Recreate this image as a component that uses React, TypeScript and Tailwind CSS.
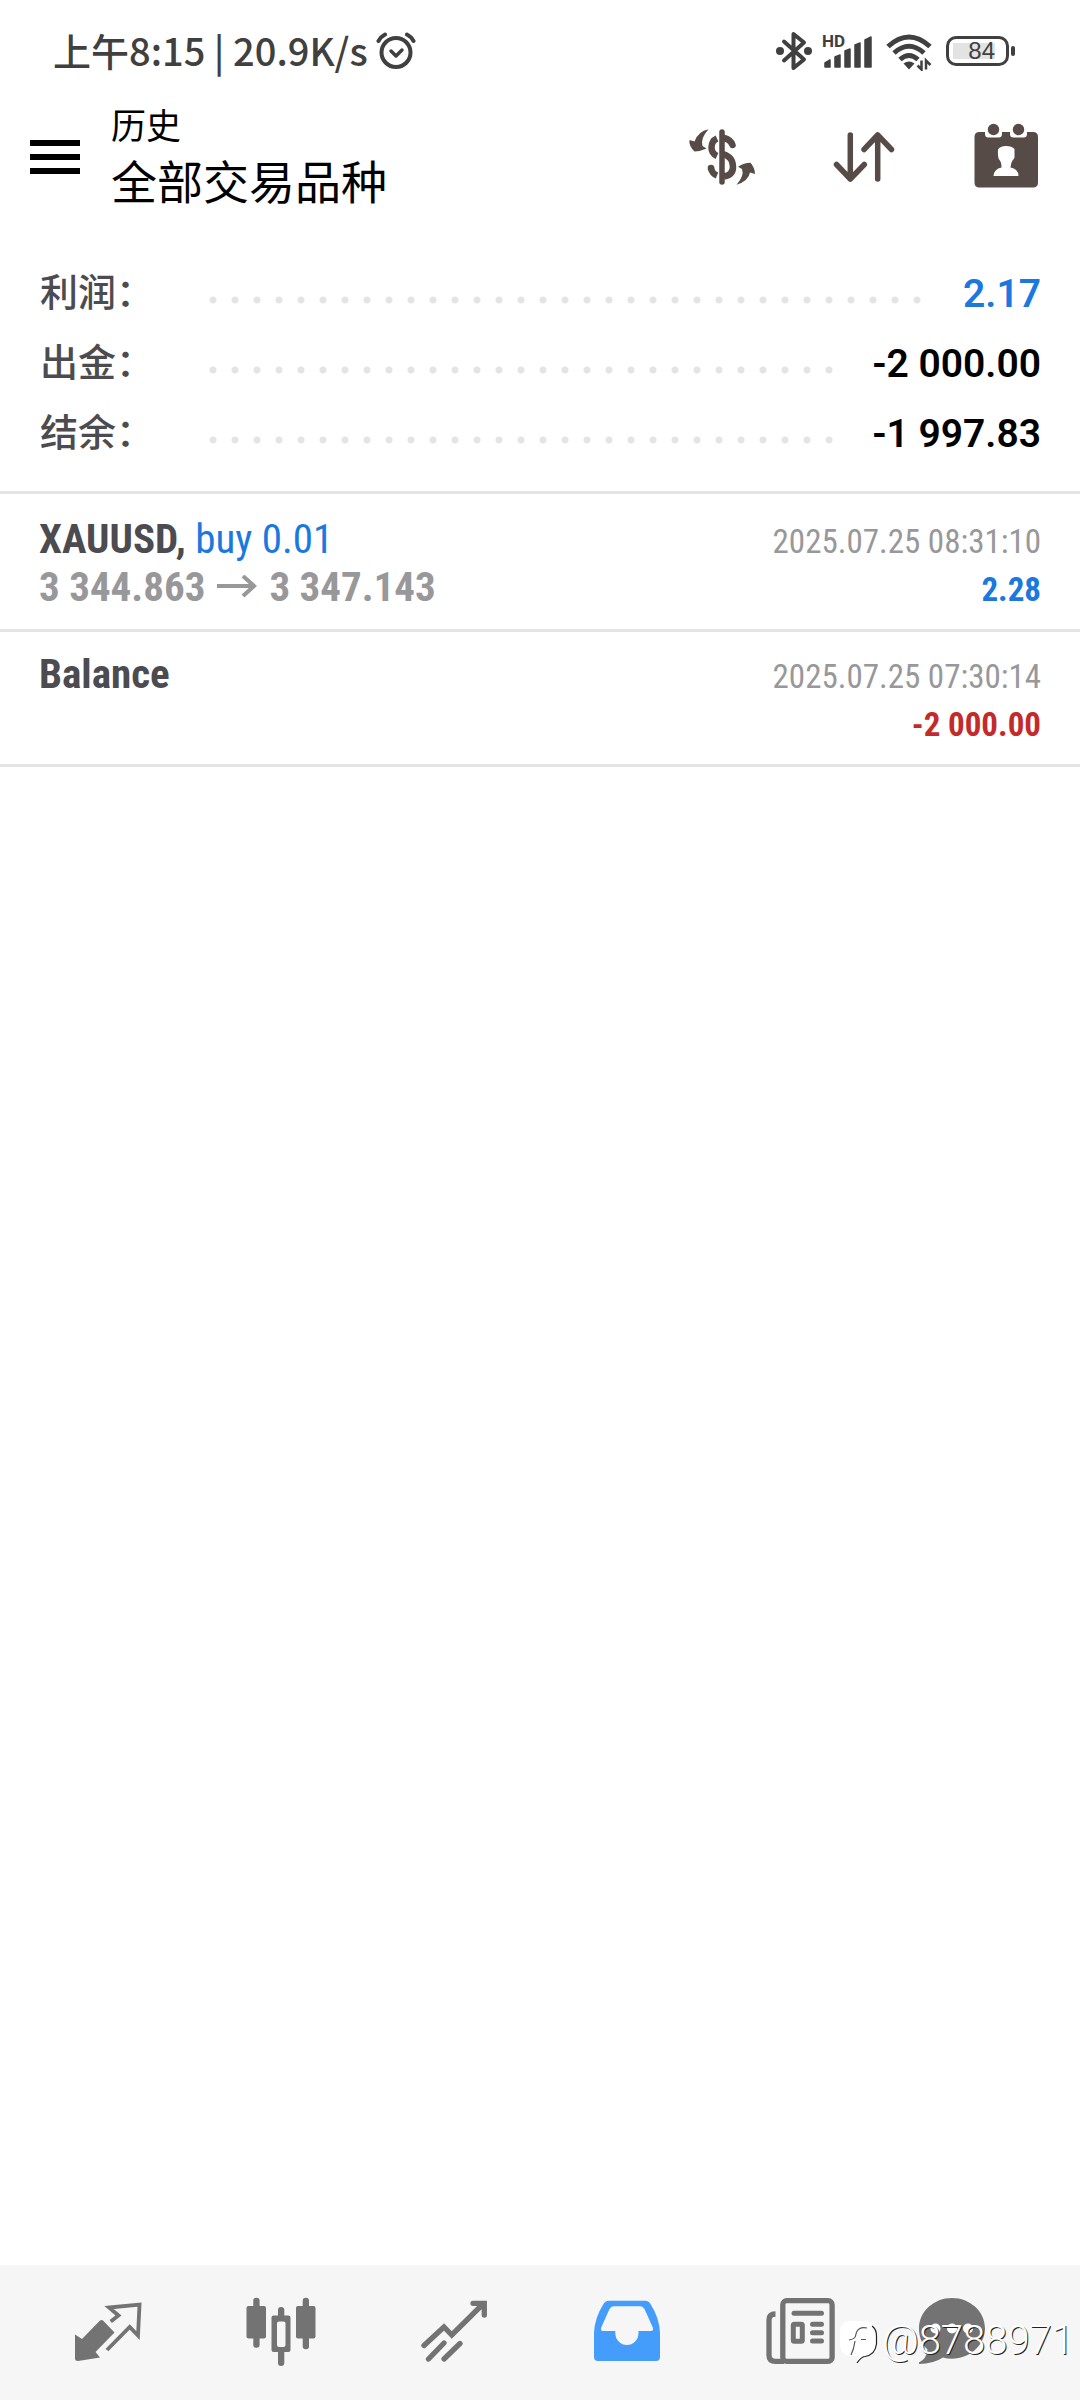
import React from "react";

const summary = [
  { label: "利润：", value: "2.17", color: "text-[#1a78de]" },
  { label: "出金：", value: "-2 000.00", color: "text-black" },
  { label: "结余：", value: "-1 997.83", color: "text-black" },
];

const StatusBar: React.FC = () => (
  <div className="flex h-[102px] items-center justify-between pl-[53px] pr-[65px] text-[#404040]">
    <div className="flex items-center gap-2">
      <span className="pb-0.5 font-['Noto_Sans_CJK_SC',sans-serif] text-[38px] font-medium leading-[48px]">
        上午8:15 | 20.9K/s
      </span>
      <svg className="h-10 w-10" viewBox="0 0 40 40" fill="none" stroke="currentColor" strokeLinecap="round">
        <circle cx="20" cy="21.5" r="14.5" strokeWidth="4" />
        <path d="M15 20l5 5 6-6" strokeWidth="3.5" strokeLinejoin="round" />
        <path d="M2.5 10Q5 5.500 9 3.500M37.500 10Q35 5.500 31 3.500" strokeWidth="4" />
      </svg>
    </div>

    <div className="flex items-center">
      {/* Bluetooth */}
      <svg className="mr-2.5 h-10 w-9" viewBox="0 0 36 40" fill="none" stroke="currentColor">
        <path d="M8 10.500L28 28.500L17.500 37V3L28 11.500L8 29.500" strokeWidth="4" strokeLinejoin="round" strokeLinecap="round" />
        <circle cx="4" cy="20" r="4" fill="currentColor" stroke="none" />
        <circle cx="32" cy="20" r="4" fill="currentColor" stroke="none" />
      </svg>
      {/* Mobile signal */}
      <svg className="mr-3 h-10 w-[52px]" viewBox="0 0 52 40" fill="currentColor">
        <text x="0" y="16" fontSize="17" fontWeight="700" fontFamily="Roboto, sans-serif">HD</text>
        <path
          d="M3 36V32L8 29V36Z M13 36V26L18 24V36Z M23 36V20L28 18V36Z M33 36V14L38 12V36Z M43 36V9L49 6V36Z"
          stroke="currentColor"
          strokeWidth="1.5"
          strokeLinejoin="round"
        />
      </svg>
      {/* Wifi */}
      <svg className="mr-3.5 h-10 w-[46px]" viewBox="0 0 46 40" fill="none" stroke="currentColor">
        <path d="M2 15.500Q23-3.500 44 15.500" strokeWidth="5" />
        <path d="M8 22Q23 8.500 38 22" strokeWidth="5" />
        <path d="M14 28.500Q23 20.500 32 28.500" strokeWidth="5" />
        <path d="M17.500 32.500Q23 28.500 28.500 32.500L23 38.500Z" fill="currentColor" stroke="none" />
        <path d="M35.500 29.500V38.500L31.500 34.500M40 38.500V29.500L44.500 34" strokeWidth="2.500" />
      </svg>
      {/* Battery */}
      <div className="flex h-[30px] w-[63px] items-center rounded-[10px] border-3 border-current p-1">
        <div className="flex h-full w-[42px] items-center justify-end bg-[#e3e3e3]">
          <span className="font-['Liberation_Sans',sans-serif] text-2xl leading-none">84</span>
        </div>
      </div>
      <div className="ml-0.5 h-[10px] w-1 rounded-sm bg-current" />
    </div>
  </div>
);

const Header: React.FC = () => (
  <header className="flex h-[110px] items-center pl-[30px] pr-[38px]">
    <button aria-label="菜单" className="flex w-[50px] flex-col gap-2 bg-transparent">
      <span className="h-1.5 w-full bg-black" />
      <span className="h-1.5 w-full bg-black" />
      <span className="h-1.5 w-full bg-black" />
    </button>
    <div className="ml-[31px] flex-1 pb-1 font-['Noto_Sans_CJK_SC',sans-serif] text-black">
      <p className="text-[35px] leading-[48px]">历史</p>
      <h1 className="text-[46px] leading-[62px]">全部交易品种</h1>
    </div>
    <div className="flex gap-[70px] text-[#574b48]">
      <button aria-label="货币">
        <svg className="h-[72px] w-[72px]" viewBox="0 0 72 72" fill="none" stroke="currentColor" strokeWidth="6.500">
          <path d="M36 11V61" strokeWidth="5.500" strokeLinecap="round" />
          <path d="M31 17.500Q25.500 20 25.500 26.500Q25.500 32.500 31 35" />
          <path d="M38 17Q44.500 18.500 46.500 24" strokeLinecap="round" />
          <path d="M37 33Q47 36 47 46Q47 54 38 55.500" />
          <path d="M25 47Q26 52.500 31 54.500" />
          <circle cx="25" cy="47" r="3.300" fill="currentColor" stroke="none" />
          <path d="M22.500 8.300Q12 10.500 8.500 20.500L3.500 19Q2.500 24.500 8.500 30.500Q14 30.500 20.500 27.500L16.500 25Q14 18 22.500 8.300Z" fill="currentColor" stroke="none" />
          <path d="M50.500 63.700Q62.500 60 64 51.500L69 53Q69 47 64.500 41.700Q58 41.700 52 45.700L56 48Q58.500 55 50.500 63.700Z" fill="currentColor" stroke="none" />
        </svg>
      </button>
      <button aria-label="排序">
        <svg className="h-[72px] w-[72px]" viewBox="0 0 72 72" fill="none" stroke="currentColor" strokeWidth="5.500" strokeLinecap="round" strokeLinejoin="round">
          <path d="M22.300 14V58M8.500 43.500L22.300 58L36.300 43.500" />
          <path d="M49.700 58V14M36 28.500L49.700 14L63.500 28.500" />
        </svg>
      </button>
      <button aria-label="日期">
        <svg className="h-[72px] w-[72px]" viewBox="0 0 72 72" fill="currentColor">
          <path
            fillRule="evenodd"
            d="M9.500 11H15V13Q15 16.500 18.500 16.500H28.500Q32 16.500 32 13V11H40V13Q40 16.500 43.500 16.500H53.500Q57 16.500 57 13V11H63Q68 11 68 16V61.500Q68 66.500 63 66.500H9.500Q4.500 66.500 4.500 61.500V16Q4.500 11 9.500 11ZM28 28.500Q30 25 36 25Q42 25 44.500 28V36.500Q44 38 42.500 39.500Q41 41.500 40.500 46.500Q48.500 48 48.500 55H23.500Q24 48 31.500 46.500Q31.500 41 29.500 39Q27.500 37 28 28.500Z"
          />
          <circle cx="23.500" cy="8.500" r="5.700" />
          <circle cx="48.500" cy="8.500" r="5.700" />
        </svg>
      </button>
    </div>
  </header>
);

const navItems = [
  {
    name: "行情",
    icon: (
      <>
        <path d="M38.700 24.500L46.500 18.500L37 10.500L67.500 7.700L66 38.500L57.700 30L35 53" fill="none" stroke="currentColor" strokeWidth="3.800" />
        <path d="M3 37.500L10 42L28 23.500Q29.500 22.500 31 23.500L42.500 35.500L23.500 55L28 60.500L6 64Q3 64 3 61.500Z" />
      </>
    ),
  },
  {
    name: "图表",
    icon: (
      <>
        <rect x="1.500" y="9" width="19.500" height="32.500" rx="2" />
        <rect x="8.300" y=".7" width="6.300" height="50" rx="3" />
        <path fillRule="evenodd" d="M28.500 18.500H43.500Q45.500 18.500 45.500 20.500V53Q45.500 55 43.500 55H28.500Q26.500 55 26.500 53V20.500Q26.500 18.500 28.500 18.500ZM34 24.500Q32 24.500 32 26.500V48Q32 50 34 50H38.500Q40.500 50 40.500 48V26.500Q40.500 24.500 38.500 24.500Z" />
        <path d="M33 19V13Q33 10 36 10Q39.300 10 39.300 13V19ZM33 54V66Q33 69 36 69Q39.300 69 39.300 66V54Z" />
        <rect x="51" y="9" width="19.500" height="32.500" rx="2" />
        <rect x="57.700" y=".7" width="6.300" height="51.500" rx="3" />
      </>
    ),
  },
  {
    name: "交易",
    icon: (
      <path
        d="M6 48.500L26 30L33.800 38L65 7M55 6.300H66.300V18M10.500 62L26 46M26 62L42 46.500"
        fill="none"
        stroke="currentColor"
        strokeWidth="5.300"
        strokeLinecap="round"
      />
    ),
  },
  {
    name: "历史",
    active: true,
    icon: (
      <path
        fillRule="evenodd"
        d="M18 3.700H54Q57.500 3.700 59.500 7Q68.500 21 69 36V60Q69 64 65 64H7Q3 64 3 60V36Q3.500 21 12.500 7Q14.500 3.700 18 3.700ZM22.500 9.300Q20 9.300 18.500 12L10 31Q9.500 34 12 34H24.300V36A11.600 12 0 0 0 47.500 36V34H60Q62.500 34 62 31L53.500 12Q52 9.300 49.500 9.300Z"
      />
    ),
  },
  {
    name: "新闻",
    icon: (
      <g fill="none" stroke="currentColor" strokeWidth="5.300">
        <rect x="18.800" y="3.700" width="49.300" height="60.700" rx="4" />
        <path d="M11.500 17Q5 17 5 23V58Q5 64.400 11.500 64.400H20" />
        <path d="M30 16.300H57.500M48.500 27.300H57.500M48.500 35.700H57.500M48.500 44H57.500" strokeLinecap="round" strokeWidth="5" />
        <rect x="29.300" y="27.300" width="9" height="17" rx="1" strokeWidth="5" />
      </g>
    ),
  },
  {
    name: "消息",
    icon: (
      <>
        <path d="M36 1C54 1 69 14.500 69 31.300S54 61.700 36 61.700Q31 61.700 27 60.500Q17 67 3 67V65.500Q10.500 62 11.500 52.500C6 47.500 3 40 3 31.300C3 14.500 18 1 36 1Z" />
        <g className="fill-white">
          <circle cx="19.500" cy="31.500" r="5" />
          <circle cx="36" cy="31.500" r="5" />
          <circle cx="52" cy="31.500" r="5" />
        </g>
      </>
    ),
  },
];

const BottomNav: React.FC = () => (
  <nav className="relative grid h-[135px] grid-cols-[173fr_173fr_173fr_173fr_173fr_132fr] items-center overflow-hidden bg-[#f6f6f6] pl-[21px] pr-[62px]">
    {navItems.map((item) => (
      <a
        key={item.name}
        href="#"
        aria-label={item.name}
        className={`flex justify-center ${item.active ? "text-[#459dfb]" : "text-[#737373]"}`}
      >
        <svg className="h-[72px] w-[72px]" viewBox="0 0 72 72" fill="currentColor">
          {item.icon}
        </svg>
      </a>
    ))}

    {/* Watermark */}
    <div className="absolute bottom-[35px] right-1.5 flex items-center gap-1 text-white">
      <svg className="h-12 w-10" viewBox="0 0 40 48">
        <path d="M12 4H27Q38 5 38 16V26Q38 38 25 40L19 46L20 39H11Q2 37 2 27V14Q3 4 12 4Z" fill="currentColor" />
        <path d="M34 9Q38.500 12 38.500 19V27Q37 38 27 39.500Q23 40 19 46" fill="none" stroke="#222" strokeWidth="1.200" />
        <path d="M29 11Q19 9 17.500 19Q17 22 11 23M17 24Q16 32 13 38M23 22.500H28" fill="none" stroke="#555" strokeWidth="1.200" />
      </svg>
      <span className="font-[Roboto,sans-serif] text-[40px] font-light leading-[48px] [text-shadow:1px_1px_0_#222]">
        @8788971
      </span>
    </div>
  </nav>
);

const App: React.FC = () => {
  return (
    <div className="flex min-h-screen flex-col bg-white">
      <StatusBar />
      <Header />

      {/* Account totals */}
      <section className="border-b-3 border-[#e4e4e4] pb-6 pl-10 pr-[39px] pt-[45px]">
        {summary.map((row) => (
          <div key={row.label} className="flex h-[70px] items-center">
            <span className="w-[162px] pb-1 font-['Noto_Sans_CJK_SC',sans-serif] text-[38px] font-medium leading-[48px] text-[#4b4b50]">
              {row.label}
            </span>
            <span className="mr-[30px] mt-4 h-2 flex-1 bg-[radial-gradient(circle,#e4e4e4_3px,transparent_4px)] bg-[length:22px_8px] bg-repeat-x" />
            <span className={`pt-1 font-[Roboto,sans-serif] text-[39px] font-semibold leading-[48px] ${row.color}`}>
              {row.value}
            </span>
          </div>
        ))}
      </section>

      {/* Deals */}
      <main className="flex-1 font-['Roboto_Condensed','Liberation_Sans_Narrow',sans-serif] leading-[48px]">
        <article className="border-b-3 border-[#e4e4e4] px-[39px] pb-[18px] pt-[21px]">
          <div className="flex h-12 items-baseline justify-between">
            <h2 className="text-[41px] font-bold text-[#4b4b50]">
              XAUUSD, <span className="font-normal text-[#1a78de]">buy 0.01</span>
            </h2>
            <time className="text-[33px] text-[#98989b]">2025.07.25 08:31:10</time>
          </div>
          <div className="flex h-12 items-baseline justify-between font-bold">
            <p className="flex items-center text-[41px] text-[#98989b]">
              3 344.863
              <svg className="mx-3 h-6 w-10" viewBox="0 0 40 24" fill="none" stroke="currentColor" strokeWidth="4">
                <path d="M0 11H37M26 1L37 11L26 21" />
              </svg>
              3 347.143
            </p>
            <span className="text-[33px] text-[#1a78de]">2.28</span>
          </div>
        </article>
        <article className="border-b-3 border-[#e4e4e4] px-[39px] pb-[18px] pt-[18px]">
          <div className="flex h-12 items-baseline justify-between">
            <h2 className="text-[41px] font-bold text-[#4b4b50]">Balance</h2>
            <time className="text-[33px] text-[#98989b]">2025.07.25 07:30:14</time>
          </div>
          <p className="h-12 text-right text-[33px] font-bold leading-[54px] text-[#c42a2a]">-2 000.00</p>
        </article>
      </main>

      <BottomNav />
    </div>
  );
};

export default App;
